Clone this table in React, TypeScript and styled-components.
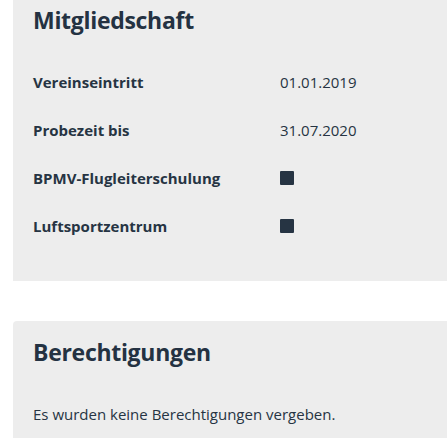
import React from "react";
import styled, { createGlobalStyle } from "styled-components";

const Global = createGlobalStyle`
  html, body { margin: 0; padding: 0; background: #ffffff; }
  body { font-family: "Open Sans", "Noto Sans", sans-serif; color: #263443; }
`;

const Page = styled.div`
  padding-left: 13px;
  display: flex;
  flex-direction: column;
  gap: 40px;
`;

const Panel = styled.section<{ $top: number; $rounded?: boolean }>`
  background: #ededed;
  padding: ${(p) => p.$top}px 20px 31px 20px;
  border-radius: ${(p) => (p.$rounded ? "4px 0 0 4px" : "0")};
`;

const Heading = styled.h2<{ $gap: number }>`
  margin: 0 0 ${(p) => p.$gap}px 0;
  font-size: 23px;
  letter-spacing: -0.3px;
  line-height: 32px;
  font-weight: 700;
  color: #243242;
`;

const Grid = styled.div`
  display: grid;
  grid-template-columns: 247px 1fr;
  grid-auto-rows: 48px;
  align-items: center;
`;

const Label = styled.div`
  font-size: 15px;
  font-weight: 700;
  line-height: 48px;
  color: #263443;
`;

const Value = styled.div`
  font-size: 15px;
  line-height: 48px;
  color: #263443;
  display: flex;
  align-items: center;
`;

const Box = styled.span`
  display: inline-block;
  width: 14px;
  height: 14px;
  background: #263443;
  border-radius: 1px;
`;

const Text = styled.p`
  margin: 0;
  font-size: 15px;
  line-height: 24px;
  color: #263443;
`;

const rows: { label: string; value: string | null }[] = [
  { label: "Vereinseintritt", value: "01.01.2019" },
  { label: "Probezeit bis", value: "31.07.2020" },
  { label: "BPMV-Flugleiterschulung", value: null },
  { label: "Luftsportzentrum", value: null },
];

export default function App() {
  return (
    <>
      <Global />
      <Page>
        <Panel $top={4}>
          <Heading $gap={22}>Mitgliedschaft</Heading>
          <Grid>
            {rows.map((r) => (
              <React.Fragment key={r.label}>
                <Label>{r.label}</Label>
                <Value>{r.value ?? <Box />}</Value>
              </React.Fragment>
            ))}
          </Grid>
        </Panel>
        <Panel $top={15} $rounded>
          <Heading $gap={34}>Berechtigungen</Heading>
          <Text>Es wurden keine Berechtigungen vergeben.</Text>
        </Panel>
      </Page>
    </>
  );
}
